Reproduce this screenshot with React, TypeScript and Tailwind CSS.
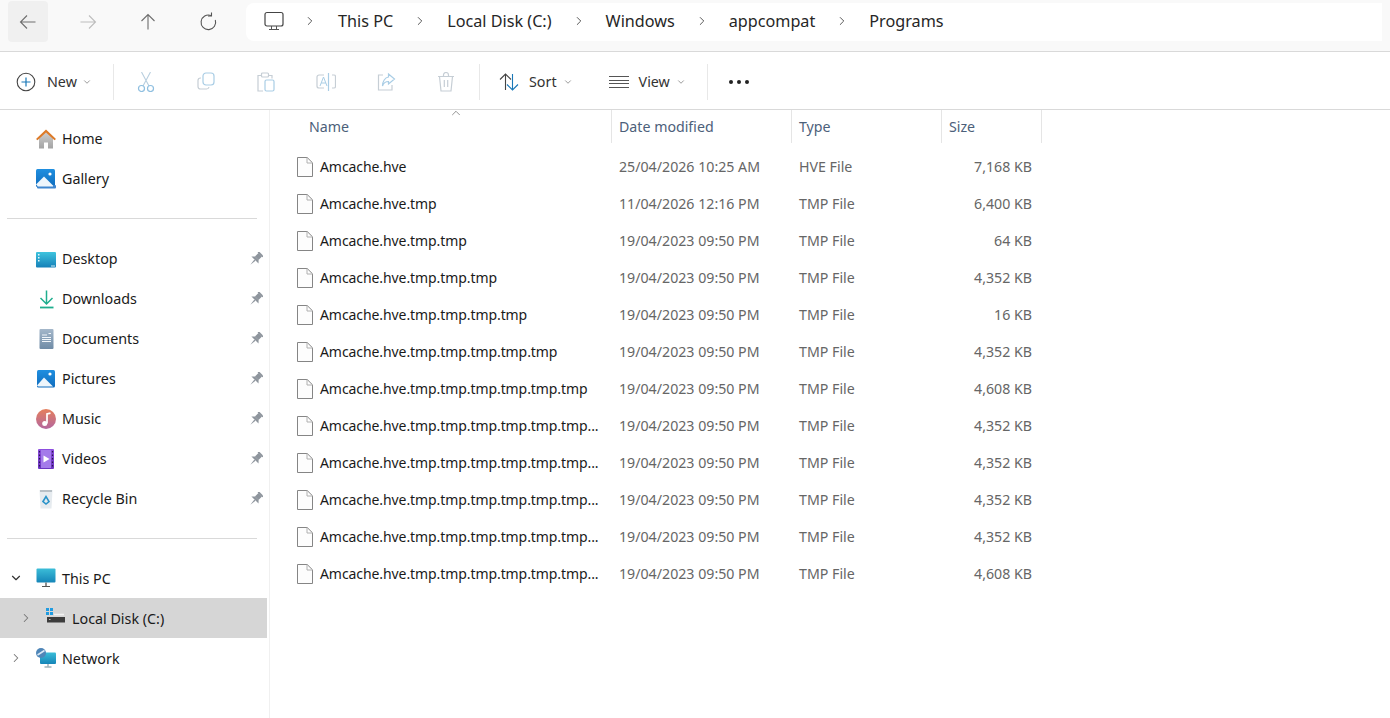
import { ChevronDown, ChevronRight, ChevronUp } from "lucide-react"
import type { ReactNode } from "react"

const font = "font-['Noto_Sans',sans-serif]"

const files = [
  ["Amcache.hve", "25/04/2026 10:25 AM", "HVE File", "7,168 KB"],
  ["Amcache.hve.tmp", "11/04/2026 12:16 PM", "TMP File", "6,400 KB"],
  ["Amcache.hve.tmp.tmp", "19/04/2023 09:50 PM", "TMP File", "64 KB"],
  ["Amcache.hve.tmp.tmp.tmp", "19/04/2023 09:50 PM", "TMP File", "4,352 KB"],
  ["Amcache.hve.tmp.tmp.tmp.tmp", "19/04/2023 09:50 PM", "TMP File", "16 KB"],
  ["Amcache.hve.tmp.tmp.tmp.tmp.tmp", "19/04/2023 09:50 PM", "TMP File", "4,352 KB"],
  ["Amcache.hve.tmp.tmp.tmp.tmp.tmp.tmp", "19/04/2023 09:50 PM", "TMP File", "4,608 KB"],
  ["Amcache.hve.tmp.tmp.tmp.tmp.tmp.tmp...", "19/04/2023 09:50 PM", "TMP File", "4,352 KB"],
  ["Amcache.hve.tmp.tmp.tmp.tmp.tmp.tmp...", "19/04/2023 09:50 PM", "TMP File", "4,352 KB"],
  ["Amcache.hve.tmp.tmp.tmp.tmp.tmp.tmp...", "19/04/2023 09:50 PM", "TMP File", "4,352 KB"],
  ["Amcache.hve.tmp.tmp.tmp.tmp.tmp.tmp...", "19/04/2023 09:50 PM", "TMP File", "4,352 KB"],
  ["Amcache.hve.tmp.tmp.tmp.tmp.tmp.tmp...", "19/04/2023 09:50 PM", "TMP File", "4,608 KB"],
]

function Svg({ children, size = 20 }: { children: ReactNode; size?: number }) {
  return (
    <svg width={size} height={size} viewBox="0 0 20 20" fill="none" className="shrink-0">
      {children}
    </svg>
  )
}

function Grad({ id, from, to }: { id: string; from: string; to: string }) {
  return (
    <defs>
      <linearGradient id={id} x1="0" y1="0" x2="0" y2="1">
        <stop offset="0" stopColor={from} />
        <stop offset="1" stopColor={to} />
      </linearGradient>
    </defs>
  )
}

function FileIcon() {
  return (
    <svg width="16" height="20" viewBox="0 0 16 20" fill="none" className="shrink-0">
      <path d="M.5.5h9.7l5.300 5.300V19.500H.5z" fill="#fdfdfd" stroke="#858585" />
      <path d="M10 .5V6h5.500" stroke="#b0b0b0" />
    </svg>
  )
}

function HomeIcon() {
  return (
    <Svg>
      <Grad id="homeWall" from="#cfcfcf" to="#a3a3a3" />
      <path d="M3 9v10.500h5v-6h4v6h5V9L10 3z" fill="url(#homeWall)" />
      <path d="M0 10 10 .5 20 10l-1.500 1.300L10 3.500 1.500 11.300z" fill="#dd7a28" />
    </Svg>
  )
}

function PictureIcon({ gallery }: { gallery?: boolean }) {
  return (
    <Svg>
      <Grad id={gallery ? "galBg" : "picBg"} from="#1f8fe0" to="#0f6cbd" />
      <rect x={gallery ? 0 : 1} y={gallery ? 0 : 1} width={gallery ? 19 : 18} height={gallery ? 18 : 17.5} rx="1.500" fill={gallery ? "url(#galBg)" : "url(#picBg)"} />
      {gallery && <rect x="1" y="16" width="19" height="3.500" rx="1" fill="#3f86cf" />}
      <path d={gallery ? "M0 15.500 8 7.500l9 9v1H2z" : "M1 16.500 8 8.500l9 9H2.500z"} fill="#eef6fc" />
      <circle cx="14" cy="5" r="1.600" fill="#fff" />
    </Svg>
  )
}

function DesktopIcon() {
  return (
    <Svg>
      <Grad id="deskBg" from="#3fc4de" to="#1580b8" />
      <rect x="0" y="3" width="20" height="15.500" rx="1" fill="url(#deskBg)" />
      <rect x="2" y="5" width="1.500" height="1.500" fill="#e6f7fb" />
      <rect x="2" y="8" width="1.500" height="1.500" fill="#e6f7fb" />
      <rect x="2" y="11" width="1.500" height="1.500" fill="#e6f7fb" />
      <rect x="15" y="16.500" width="4" height="1" fill="#d0eef6" />
    </Svg>
  )
}

function DownloadIcon() {
  return (
    <Svg>
      <path d="M10.500 1.500v13M4.500 9l6 6 6-6" stroke="#1fae8e" strokeWidth="1.500" />
      <path d="M4 18.500h13.500" stroke="#1fae8e" strokeWidth="1.800" />
    </Svg>
  )
}

function DocumentsIcon() {
  return (
    <Svg>
      <Grad id="docBg" from="#a4b7ca" to="#6f8ba6" />
      <rect x="3.500" y="0" width="14" height="20" rx="1" fill="url(#docBg)" />
      <path d="M6 6h5M6 8.500h9M6 10.500h9M6 12.500h9M12.500 4.500h2.500" stroke="#f2f6fa" strokeWidth="1" />
    </Svg>
  )
}

function MusicIcon() {
  return (
    <Svg>
      <Grad id="musicBg" from="#e57f5c" to="#b4679f" />
      <circle cx="10" cy="10" r="10" fill="url(#musicBg)" />
      <path d="M11 14.500V5l3.500-.8" stroke="#fff" strokeWidth="1.700" />
      <circle cx="8.700" cy="14.500" r="2.500" fill="#fff" />
    </Svg>
  )
}

function VideosIcon() {
  return (
    <Svg>
      <Grad id="videoBg" from="#8e4fe0" to="#6a34c0" />
      <rect x="2" y="0" width="16" height="20" rx="1" fill="url(#videoBg)" />
      <rect x="5" y="1" width="10" height="18" fill="#a47bea" />
      <path d="M7.500 6.500 13.500 10l-6 3.500z" fill="#fff" />
      <path d="M3.500 2v16M16.500 2v16" stroke="#2b1553" strokeWidth="1.200" strokeDasharray="1.500 2" />
    </Svg>
  )
}

function BinIcon() {
  return (
    <Svg>
      <path d="M3.500 1h13l-1 18.500h-11z" fill="#e6ebef" />
      <path d="M4 1h12v2H4z" fill="#b8c0c6" />
      <path d="M7 12.500 10 7.500l3 5-3 2.500z" stroke="#2a93c9" strokeWidth="1.600" />
    </Svg>
  )
}

function PcIcon() {
  return (
    <Svg>
      <Grad id="pcBg" from="#3bbdd8" to="#1585b8" />
      <rect x="0.500" y="0.500" width="19" height="14" rx="1" fill="url(#pcBg)" />
      <path d="M10 14.500V18" stroke="#6a6a6a" strokeWidth="1.500" />
      <path d="M6 18.500h8" stroke="#555" strokeWidth="1" />
    </Svg>
  )
}

function DiskIcon() {
  return (
    <svg width="20" height="16" viewBox="0 0 20 16" fill="none" className="-mt-[4px] shrink-0">
      <rect x="0" y="0" width="3" height="3" fill="#1f9be0" />
      <rect x="4" y="0" width="3" height="3" fill="#1f9be0" />
      <rect x="0" y="4" width="3" height="3" fill="#1f9be0" />
      <rect x="4" y="4" width="3" height="3" fill="#1f9be0" />
      <path d="M8 6.500h10" stroke="#f2f2f2" strokeWidth="1.500" />
      <rect x="1" y="9" width="18" height="5.500" fill="#3c3c3c" />
      <rect x="3" y="11" width="1.500" height="1" fill="#bbb" />
    </svg>
  )
}

function NetworkIcon() {
  return (
    <Svg>
      <Grad id="netBg" from="#3bbdd8" to="#1585b8" />
      <rect x="4" y="4.500" width="16" height="11.500" rx="1" fill="url(#netBg)" />
      <path d="M12 16v2.500M8.500 19h7" stroke="#6f8b96" strokeWidth="1" />
      <circle cx="5" cy="5" r="5" fill="#4f86b8" />
      <path d="M1.500 7 8.500 2.500" stroke="#dbe9f5" strokeWidth="1.500" />
    </Svg>
  )
}

function PinIcon() {
  return (
    <svg width="14" height="14" viewBox="0 0 14 14" className="shrink-0">
      <g transform="rotate(45 7 7)" fill="#8e959d">
        <rect x="3.500" y="-0.500" width="7" height="1.700" />
        <rect x="4.500" y="1" width="5" height="5" />
        <path d="M4.500 5.800h5L12 8.500H2z" />
        <path d="M6.200 8.500h1.600L7 15z" />
      </g>
    </svg>
  )
}

function ToolIcon({ children }: { children: ReactNode }) {
  return <div className="flex w-[60px] items-center justify-center">{children}</div>
}

function NavButton({ children }: { children: ReactNode }) {
  return <div className="flex h-[41px] w-[60px] items-center justify-center">{children}</div>
}

function Crumb() {
  return <ChevronRight size={14} strokeWidth={1.4} className="mx-[20px] shrink-0 text-[#333]" />
}

function Divider() {
  return <div className="h-[36px] w-px bg-[#e8e8e8]" />
}

function NavRow({ icon, label, pin }: { icon: ReactNode; label: string; pin?: boolean }) {
  return (
    <div className="flex h-[40px] items-center pl-[36px] pr-[6px]">
      <div className="flex w-[26px] shrink-0">{icon}</div>
      <span className="flex-1 text-[14.3px] text-[#1a1a1a]">{label}</span>
      {pin && <PinIcon />}
    </div>
  )
}

export default function App() {
  return (
    <div className={`flex h-[718px] w-[1390px] flex-col overflow-hidden bg-white ${font}`}>
      {/* address bar */}
      <div className="flex h-[52px] shrink-0 items-start border-b border-[#d9d9d9] bg-[#f9f9f9] pl-[8px] pt-[1px]">
        <div className="mr-[10px] flex h-[41px] w-[40px] items-center justify-center rounded-[4px] bg-[#f0f0f0]">
          <Svg>
            <path d="M17.500 10h-15M9 3.500 2.500 10 9 16.500" stroke="#6e6e6e" strokeWidth="1.100" />
          </Svg>
        </div>
        <NavButton>
          <Svg>
            <path d="M2.500 10h15M11 3.500 17.500 10 11 16.500" stroke="#bdbdbd" strokeWidth="1.100" />
          </Svg>
        </NavButton>
        <NavButton>
          <Svg>
            <path d="M10 17.500v-15M3.500 9 10 2.500 16.500 9" stroke="#6e6e6e" strokeWidth="1.100" />
          </Svg>
        </NavButton>
        <NavButton>
          <Svg>
            <path d="M13 3.500A7.300 7.300 0 1 0 17.300 8" stroke="#555" strokeWidth="1.100" />
            <path d="M13.500 0.500v3.500H10" stroke="#555" strokeWidth="1.100" />
          </Svg>
        </NavButton>
        <div className="ml-[8px] mt-[2px] flex h-[38px] w-[1136px] items-center rounded-l-[8px] bg-white pb-[2px] pl-[18px] text-[16.2px] text-[#262626]">
          <svg width="20" height="20" viewBox="0 0 20 20" fill="none" className="shrink-0">
            <rect x="1" y="1.500" width="18" height="13.500" rx="2" stroke="#444" strokeWidth="1.200" />
            <path d="M7.500 15v3M12.500 15v3M5 18.500h10" stroke="#555" strokeWidth="1" />
          </svg>
          <ChevronRight size={14} strokeWidth={1.4} className="ml-[19px] mr-[21px] shrink-0 text-[#333]" />
          <span>This PC</span>
          <Crumb />
          <span>Local Disk (C:)</span>
          <Crumb />
          <span>Windows</span>
          <Crumb />
          <span>appcompat</span>
          <Crumb />
          <span>Programs</span>
        </div>
      </div>

      {/* command bar */}
      <div className="flex h-[58px] shrink-0 items-center border-b border-[#d9d9d9] pt-[2px] text-[14.3px] text-[#333]">
        <div className="flex w-[113px] items-center pl-[16px]">
          <svg width="20" height="20" viewBox="0 0 20 20" fill="none" className="shrink-0">
            <circle cx="10" cy="10" r="8.800" stroke="#444" strokeWidth="1.100" />
            <path d="M10 5.500v9M5.500 10h9" stroke="#1a78b8" strokeWidth="1.200" />
          </svg>
          <span className="ml-[11px]">New</span>
          <ChevronDown size={10} className="ml-[5px] text-[#888]" />
        </div>
        <Divider />
        <div className="flex w-[365px] pl-[2px]">
          <ToolIcon>
            <Svg>
              <path d="M5.500 0l7.500 14M14.500 0 7 14" stroke="#b9cfdf" strokeWidth="1.100" />
              <circle cx="5.500" cy="16.500" r="3" stroke="#8fbfe0" strokeWidth="1.200" />
              <circle cx="14.500" cy="16.500" r="3" stroke="#8fbfe0" strokeWidth="1.200" />
            </Svg>
          </ToolIcon>
          <ToolIcon>
            <Svg>
              <rect x="7" y="1" width="11" height="12" rx="3" stroke="#a9cde5" strokeWidth="1.200" />
              <path d="M5 6H4.500A2.500 2.500 0 0 0 2 8.500v6A2.500 2.500 0 0 0 4.500 17h6a2.500 2.500 0 0 0 2.500-2" stroke="#c6ced5" strokeWidth="1.200" />
            </Svg>
          </ToolIcon>
          <ToolIcon>
            <Svg>
              <path d="M5 3.500H2v15.500h5M13 3.500h3v3" stroke="#c6ced5" strokeWidth="1.200" />
              <rect x="5.500" y="1" width="7" height="4" rx="1" stroke="#c6ced5" strokeWidth="1.200" />
              <rect x="9" y="8" width="9" height="11" rx="1.500" stroke="#a9cde5" strokeWidth="1.200" />
            </Svg>
          </ToolIcon>
          <ToolIcon>
            <Svg>
              <path d="M8 3H3a2 2 0 0 0-2 2v9a2 2 0 0 0 2 2h5M16 3h2a1.500 1.500 0 0 1 1.500 1.500v10A1.500 1.500 0 0 1 18 16h-2" stroke="#c6ced5" strokeWidth="1.200" />
              <path d="M12.500 1v18" stroke="#a9cde5" strokeWidth="1.200" />
              <path d="M4 14l3.500-9 3.500 9M5.200 11h4.600" stroke="#a9cde5" strokeWidth="1" />
            </Svg>
          </ToolIcon>
          <ToolIcon>
            <Svg>
              <path d="M7 3H2.500v15h13.500v-5" stroke="#c6ced5" strokeWidth="1.200" />
              <path d="M12.500 2 18.500 7l-6 5V9.500C9.500 9.500 7.500 11 6.500 14 6.500 9.500 9 5.500 12.500 5z" stroke="#a9cde5" strokeWidth="1.200" />
            </Svg>
          </ToolIcon>
          <ToolIcon>
            <Svg>
              <path d="M2 4.500h16M7.500 4.500V3a2.500 2.500 0 0 1 5 0v1.500M3.500 4.500 5 19h10l1.500-14.500M8.300 8v7M11.700 8v7" stroke="#c6ced5" strokeWidth="1.200" />
            </Svg>
          </ToolIcon>
        </div>
        <Divider />
        <div className="flex w-[227px] items-center pl-[19px]">
          <svg width="20" height="20" viewBox="0 0 20 20" fill="none" className="shrink-0">
            <path d="M6.500 18V2M1 7.500 6.500 2 12 7.500" stroke="#444" strokeWidth="1.100" />
            <path d="M13.500 2v16M8 12.500 13.500 18 19 12.500" stroke="#1a78b8" strokeWidth="1.100" />
          </svg>
          <span className="ml-[10px]">Sort</span>
          <ChevronDown size={10} className="ml-[6px] text-[#888]" />
          <svg width="20" height="14" viewBox="0 0 20 14" fill="none" className="ml-[36px] shrink-0">
            <path d="M0 1.500h20M0 5.500h20M0 8.500h20M0 12.500h20" stroke="#555" strokeWidth="1" />
          </svg>
          <span className="ml-[10px]">View</span>
          <ChevronDown size={10} className="ml-[6px] text-[#888]" />
        </div>
        <Divider />
        <div className="ml-[21px] flex gap-[4px]">
          <span className="h-[4px] w-[4px] rounded-full bg-[#222]" />
          <span className="h-[4px] w-[4px] rounded-full bg-[#222]" />
          <span className="h-[4px] w-[4px] rounded-full bg-[#222]" />
        </div>
      </div>

      <div className="flex min-h-0 flex-1">
        {/* navigation pane */}
        <div className="w-[270px] shrink-0 border-r border-[#f0f0f0] pt-[9px]">
          <NavRow icon={<HomeIcon />} label="Home" />
          <NavRow icon={<PictureIcon gallery />} label="Gallery" />
          <div className="mx-[7px] mb-[20px] mt-[19px] h-px w-[250px] bg-[#d9d9d9]" />
          <NavRow icon={<DesktopIcon />} label="Desktop" pin />
          <NavRow icon={<DownloadIcon />} label="Downloads" pin />
          <NavRow icon={<DocumentsIcon />} label="Documents" pin />
          <NavRow icon={<PictureIcon />} label="Pictures" pin />
          <NavRow icon={<MusicIcon />} label="Music" pin />
          <NavRow icon={<VideosIcon />} label="Videos" pin />
          <NavRow icon={<BinIcon />} label="Recycle Bin" pin />
          <div className="mx-[7px] my-[19px] h-px w-[250px] bg-[#d9d9d9]" />
          <div className="flex h-[40px] items-center pl-[9px]">
            <ChevronDown size={14} strokeWidth={2} className="mr-[13px] text-[#333]" />
            <div className="flex w-[26px] shrink-0"><PcIcon /></div>
            <span className="pt-[1px] text-[14.3px] text-[#1a1a1a]">This PC</span>
          </div>
          <div className="flex h-[40px] w-[267px] items-center bg-[#d6d6d6] pl-[19px]">
            <ChevronRight size={14} strokeWidth={1.8} className="mr-[13px] text-[#777]" />
            <div className="flex w-[26px] shrink-0"><DiskIcon /></div>
            <span className="pt-[1px] text-[14.3px] text-[#1a1a1a]">Local Disk (C:)</span>
          </div>
          <div className="flex h-[40px] items-center pl-[9px]">
            <ChevronRight size={14} strokeWidth={1.8} className="mr-[13px] text-[#777]" />
            <div className="flex w-[26px] shrink-0"><NetworkIcon /></div>
            <span className="pt-[1px] text-[14.3px] text-[#1a1a1a]">Network</span>
          </div>
        </div>

        {/* file list */}
        <div className="flex-1">
          <div className="relative grid h-[33px] w-[772px] grid-cols-[342px_180px_150px_100px] text-[14.2px] text-[#4c607a]">
            <ChevronUp size={14} strokeWidth={1.2} className="absolute left-[179px] top-[-4px] text-[#666]" />
            <div className="flex items-center border-r border-[#e5e5e5] pl-[39px]">Name</div>
            <div className="flex items-center border-r border-[#e5e5e5] pl-[7px]">Date modified</div>
            <div className="flex items-center border-r border-[#e5e5e5] pl-[7px]">Type</div>
            <div className="flex items-center border-r border-[#e5e5e5] pl-[7px]">Size</div>
          </div>
          <div className="pt-[5px]">
            {files.map((f, i) => (
              <div key={i} className="grid h-[37px] w-[772px] grid-cols-[342px_180px_150px_90px] items-center text-[14.2px]">
                <div className="flex items-center pl-[27px] text-[14px] tracking-[-0.08px] text-[#1a1a1a]">
                  <FileIcon />
                  <span className="ml-[7px] whitespace-nowrap">{f[0]}</span>
                </div>
                <div className="pl-[7px] text-[#666]">{f[1]}</div>
                <div className="pl-[7px] text-[#666]">{f[2]}</div>
                <div className="text-right text-[#666]">{f[3]}</div>
              </div>
            ))}
          </div>
        </div>
      </div>
    </div>
  )
}
